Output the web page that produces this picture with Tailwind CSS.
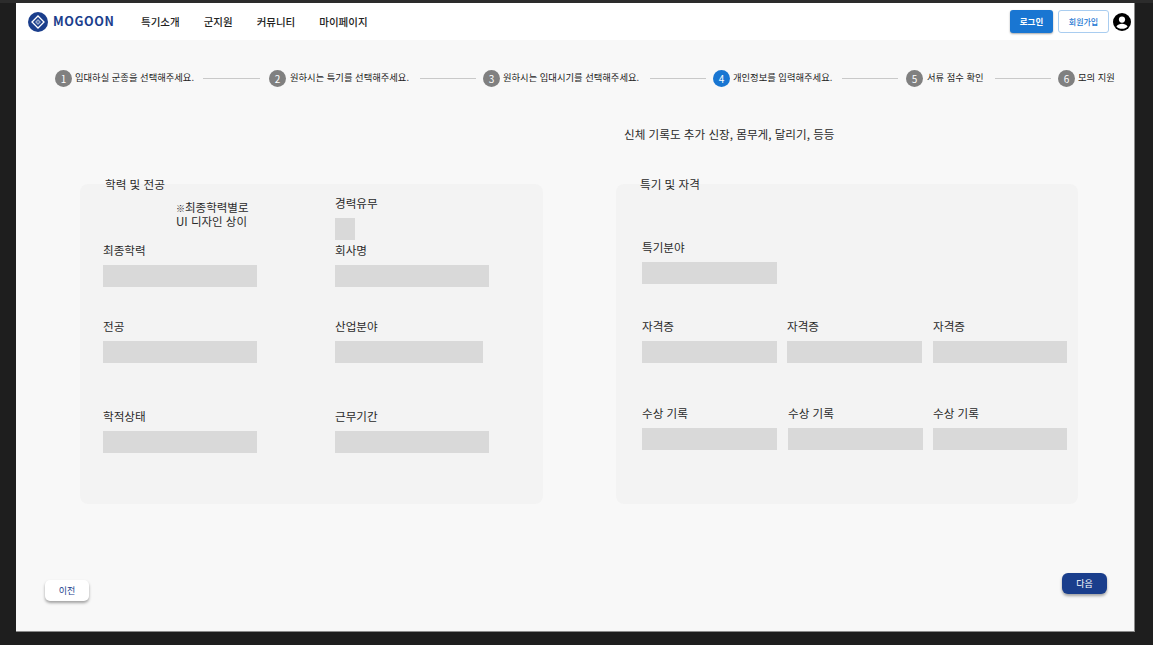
<!DOCTYPE html>
<html lang="ko">
<head>
  <meta charset="UTF-8" />
  <meta name="viewport" content="width=device-width, initial-scale=1" />
  <title>MOGOON</title>
  <script src="https://cdn.jsdelivr.net/npm/@tailwindcss/browser@4"></script>
</head>
<body class="h-[645px] overflow-hidden bg-[#1e1e1e] font-['Noto_Sans_CJK_KR',sans-serif] text-[#2a2a2a]">
  <div class="h-[3px] bg-[#2c2c2c]"></div>
  <div class="ml-4 flex h-[629px] w-[1119px] flex-col border-r border-b border-[#8a8a8a] bg-[#f8f8f8]">

    <!-- header -->
    <header class="flex h-[37px] shrink-0 items-center bg-white pl-3 pr-[3px]">
      <div class="flex w-[113px] items-center">
        <svg class="h-5 w-5" viewBox="0 0 20 20">
          <circle cx="10" cy="10" r="10" fill="#1a3e8c" />
          <path d="M10 4 16 10 10 16 4 10Z" fill="none" stroke="#fff" stroke-width="1.3" />
          <path d="M10 7 13 10 10 13 7 10Z" fill="#fff" fill-opacity="0.55" />
          <path d="M10 9 11 10 10 11 9 10Z" fill="#1a3e8c" />
        </svg>
        <span class="ml-[5px] text-[12.5px] font-bold tracking-[0.6px] text-[#1a3e8c]">MOGOON</span>
      </div>
      <nav class="flex items-center gap-6 text-[10.5px] font-medium text-[#222]">
        <span>특기소개</span>
        <span>군지원</span>
        <span>커뮤니티</span>
        <span>마이페이지</span>
      </nav>
      <div class="ml-auto flex items-center">
        <button class="h-[23px] w-[43px] rounded-[3px] bg-[#1976d2] text-[8.5px] font-bold text-white shadow-[0_1px_2px_rgba(0,0,0,0.35)]">로그인</button>
        <button class="ml-[5px] h-[23px] w-[51px] rounded-[3px] border border-[#a9cdf0] bg-white text-[8px] font-medium text-[#1976d2]">회원가입</button>
        <svg class="ml-[4px] h-[18px] w-[18px]" viewBox="0 0 18 18">
          <circle cx="9" cy="9" r="9" fill="#000" />
          <circle cx="9" cy="6.6" r="3.1" fill="#fff" />
          <path d="M3.4 13.4C4.6 11.6 6.7 10.8 9 10.8s4.4.8 5.6 2.6C13.4 14.9 11.3 15.8 9 15.8s-4.4-.9-5.6-2.4Z" fill="#fff" />
        </svg>
      </div>
    </header>

    <!-- stepper -->
    <div class="mt-[29px] flex h-[18px] items-center whitespace-nowrap pl-[39px] text-[9.3px] text-[#222]">
      <span class="flex h-[17px] w-[17px] items-center justify-center rounded-full bg-[#808080] text-[10px] text-white">1</span>
      <span class="ml-[3px] w-[119px]">입대하실 군종을 선택해주세요.</span>
      <span class="ml-[9px] h-px w-[57px] bg-[#c9c9c9]"></span>
      <span class="ml-[9px] flex h-[17px] w-[17px] items-center justify-center rounded-full bg-[#808080] text-[10px] text-white">2</span>
      <span class="ml-[4px] w-[118px]">원하시는 특기를 선택해주세요.</span>
      <span class="ml-[12px] h-px w-[56px] bg-[#c9c9c9]"></span>
      <span class="ml-[7px] flex h-[17px] w-[17px] items-center justify-center rounded-full bg-[#808080] text-[10px] text-white">3</span>
      <span class="ml-[3px] w-[136px]">원하시는 입대시기를 선택해주세요.</span>
      <span class="ml-[11px] h-px w-[56px] bg-[#c9c9c9]"></span>
      <span class="ml-[7px] flex h-[17px] w-[17px] items-center justify-center rounded-full bg-[#1976d2] text-[10px] text-white">4</span>
      <span class="ml-[3px] w-[99px]">개인정보를 입력해주세요.</span>
      <span class="ml-[10px] h-px w-[56px] bg-[#c9c9c9]"></span>
      <span class="ml-[8px] flex h-[17px] w-[17px] items-center justify-center rounded-full bg-[#808080] text-[10px] text-white">5</span>
      <span class="ml-[4px] w-[56px]">서류 점수 확인</span>
      <span class="ml-[12px] h-px w-[56px] bg-[#c9c9c9]"></span>
      <span class="ml-[7px] flex h-[17px] w-[17px] items-center justify-center rounded-full bg-[#808080] text-[10px] text-white">6</span>
      <span class="ml-[3px]">모의 지원</span>
    </div>

    <p class="ml-[608px] mt-[38px] h-[18px] text-[11.6px] leading-[18px] whitespace-nowrap">신체 기록도 추가 신장, 몸무게, 달리기, 등등</p>

    <!-- panels -->
    <div class="mt-[41px] flex pl-16">
      <section class="relative flex h-[320px] w-[463px] rounded-lg bg-[#f3f3f3] pl-[23px]">
        <h2 class="absolute left-[25px] top-[-8px] text-[11.6px] leading-4">학력 및 전공</h2>
        <div class="w-[232px] text-[11.6px]">
          <div class="mt-4 pl-[73px] text-[11.5px]">
            <p class="h-[14px] leading-[14px]"><span class="text-[9px]">※</span>최종학력별로</p>
            <p class="h-[14px] leading-[14px]">UI 디자인 상이</p>
          </div>
          <p class="mt-3 h-5 leading-[21px]">최종학력</p>
          <div class="mt-[5px] h-[22px] w-[154px] bg-[#d9d9d9]"></div>
          <p class="mt-[29px] h-5 leading-5">전공</p>
          <div class="mt-[5px] h-[22px] w-[154px] bg-[#d9d9d9]"></div>
          <p class="mt-[43px] h-5 leading-[21px]">학적상태</p>
          <div class="mt-[5px] h-[22px] w-[154px] bg-[#d9d9d9]"></div>
        </div>
        <div class="text-[11.6px]">
          <p class="mt-[9px] h-5 leading-[21px]">경력유무</p>
          <div class="mt-[5px] h-[22px] w-5 bg-[#d9d9d9]"></div>
          <p class="h-5 leading-[21px]">회사명</p>
          <div class="mt-[5px] h-[22px] w-[154px] bg-[#d9d9d9]"></div>
          <p class="mt-[29px] h-5 leading-5">산업분야</p>
          <div class="mt-[5px] h-[22px] w-[148px] bg-[#d9d9d9]"></div>
          <p class="mt-[43px] h-5 leading-[21px]">근무기간</p>
          <div class="mt-[5px] h-[22px] w-[154px] bg-[#d9d9d9]"></div>
        </div>
      </section>

      <section class="relative ml-[73px] h-[320px] w-[462px] rounded-lg bg-[#f3f3f3] pl-[26px] pt-[53px] text-[11.6px]">
        <h2 class="absolute left-[24px] top-[-8px] text-[11.6px] leading-4">특기 및 자격</h2>
        <p class="h-5 leading-[21px]">특기분야</p>
        <div class="mt-[5px] h-[22px] w-[135px] bg-[#d9d9d9]"></div>
        <div class="mt-8 flex">
          <div class="w-[145px]">
            <p class="h-5 leading-5">자격증</p>
            <div class="mt-[5px] h-[22px] w-[135px] bg-[#d9d9d9]"></div>
          </div>
          <div class="w-[146px]">
            <p class="h-5 leading-5">자격증</p>
            <div class="mt-[5px] h-[22px] w-[135px] bg-[#d9d9d9]"></div>
          </div>
          <div>
            <p class="h-5 leading-5">자격증</p>
            <div class="mt-[5px] h-[22px] w-[134px] bg-[#d9d9d9]"></div>
          </div>
        </div>
        <div class="mt-10 flex">
          <div class="w-[146px]">
            <p class="h-5 leading-[21px]">수상 기록</p>
            <div class="mt-[5px] h-[22px] w-[135px] bg-[#d9d9d9]"></div>
          </div>
          <div class="w-[145px]">
            <p class="h-5 leading-[21px]">수상 기록</p>
            <div class="mt-[5px] h-[22px] w-[135px] bg-[#d9d9d9]"></div>
          </div>
          <div>
            <p class="h-5 leading-[21px]">수상 기록</p>
            <div class="mt-[5px] h-[22px] w-[134px] bg-[#d9d9d9]"></div>
          </div>
        </div>
      </section>
    </div>

    <!-- bottom buttons -->
    <div class="mt-[69px] flex items-start justify-between pl-[29px] pr-[27px]">
      <button class="mt-[7px] h-[21px] w-[44px] rounded-[5px] bg-white text-[9px] text-[#1a3e8c] shadow-[0_2px_3px_rgba(0,0,0,0.35)]">이전</button>
      <button class="h-[21px] w-[45px] rounded-[6px] bg-[#1a3e8c] text-[9px] text-white shadow-[0_2px_3px_rgba(0,0,0,0.35)]">다음</button>
    </div>
  </div>
</body>
</html>
